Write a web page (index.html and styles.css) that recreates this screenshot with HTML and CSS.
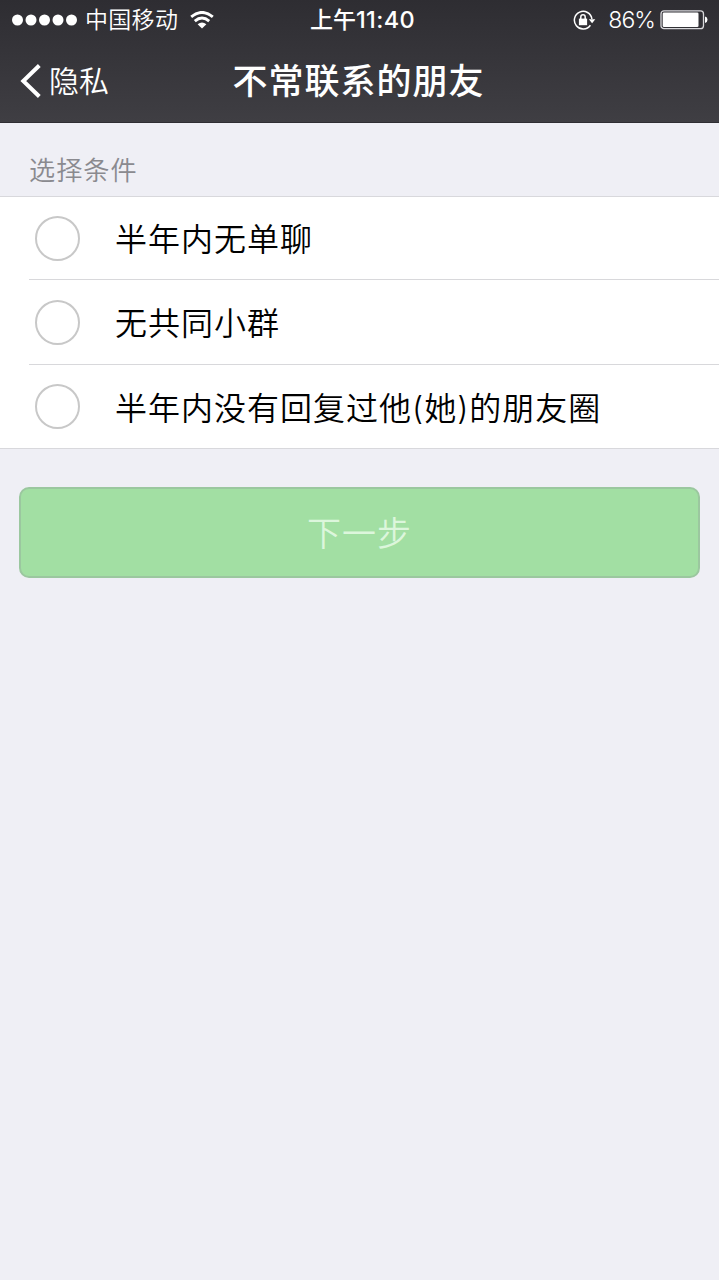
FILE: index.html
```html
<!DOCTYPE html>
<html lang="zh-CN">
<head>
<meta charset="utf-8">
<title>不常联系的朋友</title>
<link rel="stylesheet" href="styles.css">
</head>
<body>
<header class="header">
  <div class="status">
    <div class="status-left">
      <svg class="signal" width="66" height="12" viewBox="0 0 66 12" fill="#fff"><circle cx="5.5" cy="6" r="5.5"/><circle cx="19" cy="6" r="5.5"/><circle cx="32.5" cy="6" r="5.5"/><circle cx="46" cy="6" r="5.5"/><circle cx="59.5" cy="6" r="5.5"/></svg>
      <span class="carrier">中国移动</span>
      <svg class="wifi" width="24" height="18" viewBox="0 0 24 18" fill="none" stroke="#fff" stroke-width="2.9"><path d="M1.2 5.8Q12-3 22.8 5.8"/><path d="M4.8 10.1Q12 4 19.2 10.1"/><path d="M7.6 13.2Q12 9.6 16.4 13.2L12 17.6Z" fill="#fff" stroke="none"/></svg>
    </div>
    <span class="time">上午<b class="clock">11:40</b></span>
    <div class="status-right">
      <svg class="lock" width="23" height="21" viewBox="0 0 23 21" fill="none" stroke="#fff" stroke-width="1.5"><path d="M17.4 15.2A8.8 8.8 0 1 1 18.9 9"/><path d="M15.8 9.2H22.3L19.1 13.2Z" fill="#fff" stroke="none"/><rect x="5.9" y="8.6" width="8.2" height="6.6" fill="#fff" stroke="none"/><path d="M7.8 9V6.9A2.2 2.2 0 0 1 12.2 6.9V9" stroke-width="1.5"/></svg>
      <span class="percent">86%</span>
      <svg class="battery" width="48" height="20" viewBox="0 0 48 20" fill="none"><rect x="1" y=".9" width="42.5" height="17.8" rx="3" stroke="#d8d8db" stroke-width="1.3"/><rect x="2.7" y="2.5" width="35.8" height="14.6" rx="1.3" fill="#fff"/><path d="M45 6.6Q47.5 7.2 47.5 9.8Q47.5 12.4 45 13Z" fill="#fff"/></svg>
    </div>
  </div>
  <nav class="nav">
    <a class="back"><svg width="22" height="36" viewBox="0 0 22 36" fill="none" stroke="#fff" stroke-width="4"><path d="M20.3 2.5L4.3 18L20.3 33.5"/></svg><span>隐私</span></a>
    <h1 class="title">不常联系的朋友</h1>
  </nav>
</header>
<main>
  <h2 class="section">选择条件</h2>
  <ul class="list">
    <li class="row"><span class="radio"></span><span class="label">半年内无单聊</span></li>
    <li class="row"><span class="radio"></span><span class="label">无共同小群</span></li>
    <li class="row"><span class="radio"></span><span class="label">半年内没有回复过他(她)的朋友圈</span></li>
  </ul>
  <button class="next" disabled>下一步</button>
</main>
</body>
</html>
```
FILE: styles.css
```css
* { box-sizing: border-box; }
body {
  margin: 0;
  min-height: 1280px;
  background: #efeff5;
  font-family: Inter, "Noto Sans CJK SC", sans-serif;
}
svg { display: block; flex: none; }
.header {
  height: 123px;
  color: #fff;
  background: linear-gradient(#2e2d32, #3f3e43);
  border-bottom: 1px solid #2f2e33;
}
.status {
  display: grid;
  grid-template-columns: 1fr auto 1fr;
  align-items: center;
  height: 40px;
  padding: 0 11px 0 12px;
  font-size: 23px;
  line-height: 40px;
}
.status-left, .status-right { display: flex; align-items: center; }
.status-right { justify-content: flex-end; }
.carrier { margin-left: 7px; font-weight: 350; letter-spacing: .3px; }
.wifi { margin-left: 12px; }
.time { padding-left: 5px; font-weight: 500; }
.clock { font-size: 23.5px; font-weight: 500; letter-spacing: .4px; }
.lock { margin-right: 12px; }
.percent { margin-right: 5px; font-weight: 350; letter-spacing: -.9px; }
.nav {
  display: grid;
  grid-template-columns: 1fr auto 1fr;
  align-items: center;
  height: 82px;
  padding: 0 19px;
}
.back { display: flex; align-items: center; gap: 8px; font-size: 30px; font-weight: 350; line-height: 80px; }
.title {
  margin: 0 0 0 -2px;
  padding-top: 1px;
  font-size: 35px;
  font-weight: 500;
  letter-spacing: 1px;
  line-height: 81px;
}
.section {
  height: 73px;
  margin: 0;
  padding: 22px 28px 0 29px;
  color: #8a8a8f;
  font-size: 26.2px;
  font-weight: 350;
  letter-spacing: 1px;
  line-height: 52px;
}
.list {
  margin: 0;
  padding: 0;
  list-style: none;
  background: #fff;
  border-top: 1px solid #d8d8dc;
  border-bottom: 1px solid #d8d8dc;
}
.row {
  display: flex;
  align-items: center;
  height: 84px;
  margin-left: 29px;
  padding-left: 6px;
}
.row:first-child { height: 82px; }
.row + .row { height: 85px; border-top: 1px solid #d8d8db; }
.row:last-child { height: 84px; }
.radio {
  flex: none;
  width: 45px;
  height: 45px;
  border: 2px solid #c8c8c8;
  border-radius: 50%;
}
.label {
  margin-left: 35px;
  padding-bottom: 2px;
  color: #000;
  font-size: 32px;
  font-weight: 350;
  letter-spacing: 1px;
  white-space: nowrap;
}
.next {
  display: block;
  width: 681px;
  height: 91px;
  margin: 38px 0 0 19px;
  padding: 0 0 2px;
  color: #dcf6dc;
  background: #a2dfa3;
  border: 2px solid #9bc79f;
  border-radius: 10px;
  font: 350 34px Inter, "Noto Sans CJK SC", sans-serif;
  letter-spacing: 1px;
}
```
